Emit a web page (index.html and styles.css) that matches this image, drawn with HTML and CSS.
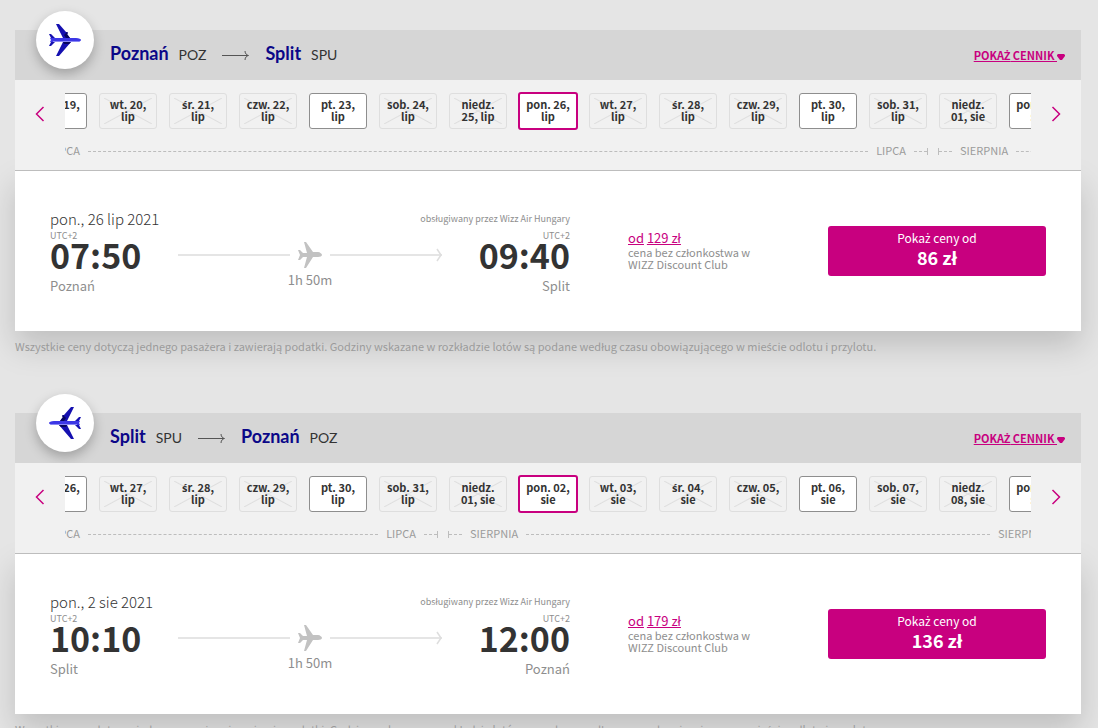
FILE: index.html
```html
<!DOCTYPE html>
<html lang="pl">
<head>
<meta charset="utf-8">
<title>Wybierz lot</title>
<link rel="stylesheet" href="styles.css">
</head>
<body>
<svg class="sprite" aria-hidden="true">
  <symbol id="jet" viewBox="0 0 32 32">
    <path fill="#1510b0" d="M7 0h3l7 8 1 0 1 1-1 1 3 4H14zM7 32h3l12-14h-8zM0 10h2l4 4H2zM0 22h2l4-4H2z"/>
    <path fill="#07055c" d="M15 11l3-3 1 1-1 1 3 4h-4zM14 18h8l-2 2h-5z"/>
    <path fill="#3c37e6" d="M1 14h26c3 0 5 1 5 2s-2 2-5 2H1l1-2z"/>
    <path fill="#8a88f5" d="M4 17h27c-1 1-3 1-4 1H4z"/>
  </symbol>
  <symbol id="plane" viewBox="0 0 24 26">
    <path fill="#c2c2c2" d="M6 0h2l7 10h5c2 0 4 2 4 3s-2 2-4 2h-5L8 26H6l3-11H5l-3 3H0l2-5-2-5h2l3 3h4z"/>
  </symbol>
  <symbol id="long-arrow" viewBox="0 0 28 10">
    <path fill="none" stroke="#555" d="M0 5.500h26M23 1c0 3 2 4 3.500 4.500C25 6 23 7 23 10"/>
  </symbol>
</svg>
<main class="page">

  <section class="flight">
    <header class="route">
      <span class="badge"><svg class="jet"><use href="#jet"/></svg></span>
      <h2 class="cities">
        <span class="city">Poznań</span><span class="code">POZ</span>
        <svg class="long-arrow"><use href="#long-arrow"/></svg>
        <span class="city">Split</span><span class="code">SPU</span>
      </h2>
      <a class="fares" href="#">POKA<span class="pl">Ż</span> CENNIK <svg class="caret" viewBox="0 0 8 6"><path d="M1 0h6l1 1v1L5 6H3L0 2V1z"/></svg></a>
    </header>
    <div class="calendar">
      <button class="nav" aria-label="Poprzednie"><svg viewBox="0 0 10 16"><path d="M8.500 1L1.500 8l7 7"/></svg></button>
      <div class="window">
        <div class="track">
          <div class="days">
            <button class="day">pon. 19, lip</button>
            <button class="day" disabled>wt. 20,<br>lip</button>
            <button class="day" disabled><span class="pl">ś</span>r. 21,<br>lip</button>
            <button class="day" disabled>czw. 22,<br>lip</button>
            <button class="day">pt. 23,<br>lip</button>
            <button class="day" disabled>sob. 24,<br>lip</button>
            <button class="day" disabled>niedz.<br>25, lip</button>
            <button class="day selected">pon. 26,<br>lip</button>
            <button class="day" disabled>wt. 27,<br>lip</button>
            <button class="day" disabled><span class="pl">ś</span>r. 28,<br>lip</button>
            <button class="day" disabled>czw. 29,<br>lip</button>
            <button class="day">pt. 30,<br>lip</button>
            <button class="day" disabled>sob. 31,<br>lip</button>
            <button class="day" disabled>niedz.<br>01, sie</button>
            <button class="day">pon. 02,<br>sie</button>
          </div>
          <div class="months">
            <div class="month" style="--days: 13"><i class="end start"></i><span>LIPCA</span><i class="dash"></i><span>LIPCA</span><i class="end"></i></div>
            <div class="month" style="--days: 2"><i class="end start"></i><span>SIERPNIA</span><i class="dash"></i></div>
          </div>
        </div>
      </div>
      <button class="nav" aria-label="Następne"><svg viewBox="0 0 10 16"><path d="M1.500 1l7 7-7 7"/></svg></button>
    </div>
    <div class="offer">
      <div class="journey">
        <div class="headline"><span class="date">pon., 26 lip 2021</span><span class="operator">obsługiwany przez Wizz Air Hungary</span></div>
        <div class="stops">
          <div class="stop"><span class="zone">UTC+2</span><time class="time">07:50</time><span class="place">Poznań</span></div>
          <div class="path">
            <div class="line"><i class="rule"></i><svg class="plane"><use href="#plane"/></svg><i class="rule"></i><svg class="tip" viewBox="0 0 6 14"><path d="M1 1l4 6-4 6"/></svg></div>
            <span class="duration">1h 50m</span>
          </div>
          <div class="stop arrival"><span class="zone">UTC+2</span><time class="time">09:40</time><span class="place">Split</span></div>
        </div>
      </div>
      <div class="price">
        <div class="regular"><a href="#">od</a> <a href="#">129 zł</a></div>
        <div class="club">cena bez członkostwa w WIZZ Discount Club</div>
      </div>
      <button class="buy"><span>Poka<span class="pl">ż</span> ceny od</span><strong>86 zł</strong></button>
    </div>
    <p class="note">Wszystkie ceny dotyczą jednego pasa<span class="pl">ż</span>era i zawierają podatki. Godziny wskazane w rozkładzie lotów są podane według czasu obowiązującego w mie<span class="pl">ś</span>cie odlotu i przylotu.</p>
  </section>

  <section class="flight">
    <header class="route">
      <span class="badge"><svg class="jet back"><use href="#jet"/></svg></span>
      <h2 class="cities">
        <span class="city">Split</span><span class="code">SPU</span>
        <svg class="long-arrow"><use href="#long-arrow"/></svg>
        <span class="city">Poznań</span><span class="code">POZ</span>
      </h2>
      <a class="fares" href="#">POKA<span class="pl">Ż</span> CENNIK <svg class="caret" viewBox="0 0 8 6"><path d="M1 0h6l1 1v1L5 6H3L0 2V1z"/></svg></a>
    </header>
    <div class="calendar">
      <button class="nav" aria-label="Poprzednie"><svg viewBox="0 0 10 16"><path d="M8.500 1L1.500 8l7 7"/></svg></button>
      <div class="window">
        <div class="track">
          <div class="days">
            <button class="day">pon. 26, lip</button>
            <button class="day" disabled>wt. 27,<br>lip</button>
            <button class="day" disabled><span class="pl">ś</span>r. 28,<br>lip</button>
            <button class="day" disabled>czw. 29,<br>lip</button>
            <button class="day">pt. 30,<br>lip</button>
            <button class="day" disabled>sob. 31,<br>lip</button>
            <button class="day" disabled>niedz.<br>01, sie</button>
            <button class="day selected">pon. 02,<br>sie</button>
            <button class="day" disabled>wt. 03,<br>sie</button>
            <button class="day" disabled><span class="pl">ś</span>r. 04,<br>sie</button>
            <button class="day" disabled>czw. 05,<br>sie</button>
            <button class="day">pt. 06,<br>sie</button>
            <button class="day" disabled>sob. 07,<br>sie</button>
            <button class="day" disabled>niedz.<br>08, sie</button>
            <button class="day">pon. 09,<br>sie</button>
          </div>
          <div class="months">
            <div class="month" style="--days: 6"><i class="end start"></i><span>LIPCA</span><i class="dash"></i><span>LIPCA</span><i class="end"></i></div>
            <div class="month" style="--days: 9"><i class="end start"></i><span>SIERPNIA</span><i class="dash"></i><span>SIERPNIA</span><i class="end"></i></div>
          </div>
        </div>
      </div>
      <button class="nav" aria-label="Następne"><svg viewBox="0 0 10 16"><path d="M1.500 1l7 7-7 7"/></svg></button>
    </div>
    <div class="offer">
      <div class="journey">
        <div class="headline"><span class="date">pon., 2 sie 2021</span><span class="operator">obsługiwany przez Wizz Air Hungary</span></div>
        <div class="stops">
          <div class="stop"><span class="zone">UTC+2</span><time class="time">10:10</time><span class="place">Split</span></div>
          <div class="path">
            <div class="line"><i class="rule"></i><svg class="plane"><use href="#plane"/></svg><i class="rule"></i><svg class="tip" viewBox="0 0 6 14"><path d="M1 1l4 6-4 6"/></svg></div>
            <span class="duration">1h 50m</span>
          </div>
          <div class="stop arrival"><span class="zone">UTC+2</span><time class="time">12:00</time><span class="place">Poznań</span></div>
        </div>
      </div>
      <div class="price">
        <div class="regular"><a href="#">od</a> <a href="#">179 zł</a></div>
        <div class="club">cena bez członkostwa w WIZZ Discount Club</div>
      </div>
      <button class="buy"><span>Poka<span class="pl">ż</span> ceny od</span><strong>136 zł</strong></button>
    </div>
    <p class="note">Wszystkie ceny dotyczą jednego pasa<span class="pl">ż</span>era i zawierają podatki. Godziny wskazane w rozkładzie lotów są podane według czasu obowiązującego w mie<span class="pl">ś</span>cie odlotu i przylotu.</p>
  </section>

</main>
</body>
</html>
```
FILE: styles.css
```css
* { box-sizing: border-box; }

body {
  margin: 0;
  background: #e5e5e5;
  color: #333;
  font: 12px/16px "Noto Sans CJK JP", "Noto Sans", sans-serif;
}

button { font: inherit; color: inherit; cursor: pointer; }

.pl { font-family: "Noto Sans", sans-serif; line-height: 0; }

.sprite { display: none; }

.page {
  display: flex;
  flex-direction: column;
  gap: 59px;
  padding: 30px 17px 0 15px;
}

/* Route bar */
.route {
  display: flex;
  align-items: center;
  height: 50px;
  padding: 0 16px 0 21px;
  background: #d6d6d6;
}

.badge {
  display: grid;
  place-items: center;
  flex: none;
  width: 58px;
  height: 58px;
  margin: -30px 16px 0 0;
  border-radius: 50%;
  background: #fff;
  box-shadow: 0 5px 12px rgba(0, 0, 0, .25);
}

.jet { width: 32px; height: 32px; }
.back { transform: scaleX(-1); }

.cities {
  display: flex;
  align-items: baseline;
  flex: 1;
  margin: 0;
  padding-bottom: 2px;
  font: 400 14px/24px Lato, sans-serif;
}

.city { margin-right: 10px; color: #0b0788; font-size: 18px; font-weight: 700; }
.long-arrow { width: 28px; height: 10px; margin: 0 15px 0 16px; }

.fares {
  color: #c8007f;
  font-size: 11px;
  font-weight: 700;
}

.caret { width: 8px; height: 6px; fill: #c8007f; }

/* Date carousel */
.calendar {
  position: relative;
  z-index: 1;
  display: flex;
  height: 91px;
  border-bottom: 1px solid #bdbdbd;
  background: #f1f1f1;
}

.nav {
  flex: none;
  width: 50px;
  height: 68px;
  padding: 0;
  border: 0;
  background: none;
}

.nav svg {
  display: block;
  width: 10px;
  height: 16px;
  margin: 0 auto;
  fill: none;
  stroke: #c8007f;
  stroke-width: 1.500;
}

.window {
  display: flex;
  justify-content: center;
  flex: 1;
  min-width: 0;
  overflow: hidden;
}

.track { flex: none; }

.days {
  display: grid;
  grid-template-columns: repeat(15, 70px);
  place-items: center;
  height: 62px;
}

.day {
  position: relative;
  width: 58px;
  height: 36px;
  padding: 0 0 2px;
  border: 1px solid #8e8e8e;
  border-radius: 3px;
  background: #fff;
  font-size: 11px;
  font-weight: 700;
  line-height: 12px;
}

.day:disabled {
  border-color: #dedede;
  background: none;
  color: #333;
  cursor: default;
}

.day:disabled::before {
  content: "";
  position: absolute;
  z-index: -1;
  inset: 4px;
  background:
    linear-gradient(to top right, transparent calc(50% - 1px), #dedede, transparent calc(50% + 1px)),
    linear-gradient(to bottom right, transparent calc(50% - 1px), #dedede, transparent calc(50% + 1px));
}

.day.selected {
  width: 60px;
  height: 38px;
  border: 2px solid #c8007f;
}

.months { display: flex; }

.month {
  display: flex;
  align-items: center;
  gap: 8px;
  flex: none;
  width: calc(var(--days) * 70px);
  height: 18px;
  padding: 0 5px;
  color: #9b9b9b;
  font-size: 11px;
}

.month span { padding-bottom: 2px; }

.dash { flex: 1; border-top: 1px dashed #bdbdbd; }

.end {
  display: flex;
  align-items: center;
  width: 14px;
  height: 7px;
  border-right: 1px solid #bdbdbd;
}

.end::before { content: ""; flex: 1; border-top: 1px dashed #bdbdbd; }
.start { border-right: 0; border-left: 1px solid #bdbdbd; }

/* Flight offer */
.offer {
  display: flex;
  align-items: center;
  height: 160px;
  padding: 0 35px;
  background: #fff;
  box-shadow: 0 15px 30px rgba(0, 0, 0, .17);
}

.journey { flex: none; width: 520px; padding-top: 2px; }

.headline { display: flex; justify-content: space-between; line-height: 20px; }
.date { font-size: 15px; font-weight: 300; }
.operator { color: #8e8e8e; font-size: 9px; }

.stops { display: flex; justify-content: space-between; }

.stop { display: flex; flex-direction: column; color: #8e8e8e; }
.arrival { align-items: flex-end; }
.zone { font-size: 9px; line-height: 14px; }
.time { color: #333; font-size: 34px; line-height: 24px; font-weight: 700; }
.place { margin-top: 10px; font-size: 13px; line-height: 18px; }

.path {
  display: flex;
  flex-direction: column;
  align-items: center;
  width: 264px;
  padding-top: 13px;
  color: #8e8e8e;
  font-size: 13px;
}

.line { display: flex; align-items: center; width: 100%; height: 26px; }
.rule { flex: 1; height: 2px; background: #e5e5e5; }
.plane { width: 24px; height: 26px; margin: 0 8px; }

.tip {
  width: 6px;
  height: 14px;
  margin-left: -6px;
  fill: none;
  stroke: #dedede;
  stroke-width: 1.500;
}

.duration { line-height: 24px; }

.price { flex: 1; margin: 0 0 2px 58px; color: #8e8e8e; }
.regular { font-size: 13px; }
.regular a { color: #c8007f; }
.club { max-width: 140px; font-size: 11px; line-height: 12px; }

.buy {
  display: flex;
  flex-direction: column;
  align-items: center;
  justify-content: center;
  flex: none;
  width: 218px;
  height: 50px;
  padding: 0 0 4px;
  border: 0;
  border-radius: 3px;
  background: #c8007f;
  color: #fff;
  font-size: 12px;
}

.buy strong { font-size: 18px; line-height: 22px; }

.note {
  margin: 7px 0 0;
  color: #9b9b9b;
  font-size: 11px;
}
```
